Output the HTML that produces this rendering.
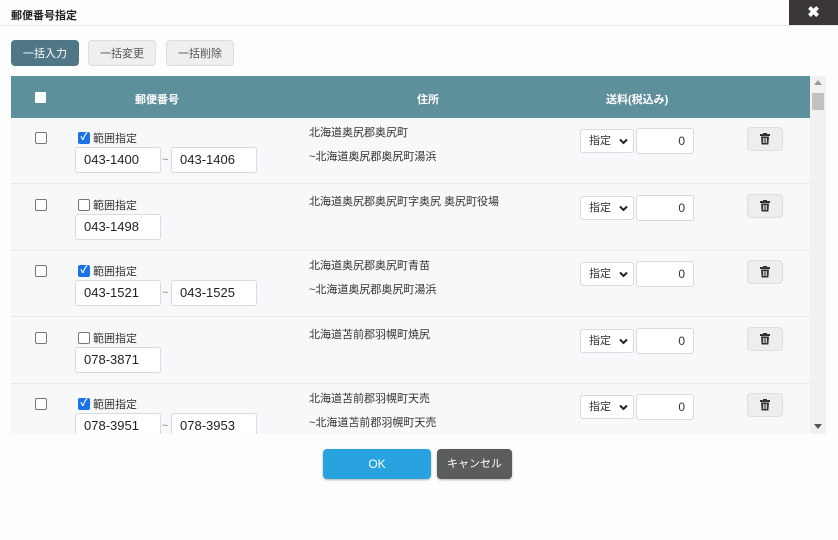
<!DOCTYPE html><html><head><meta charset="utf-8"><style>
*{box-sizing:border-box;margin:0;padding:0}
body{width:838px;height:540px;background:#fdfdfd;font-family:"Liberation Sans","Noto Sans CJK JP",sans-serif;position:relative;overflow:hidden;color:#333}
.a{position:absolute}
.title{left:11px;top:7px;font-size:11px;font-weight:bold;color:#222}
.close{left:789px;top:0;width:49px;height:25px;background:#3a3538;color:#fff;font-size:15px;font-weight:bold;text-align:center;line-height:25px}
.btn{top:40px;height:26px;border-radius:4px;font-size:11px;text-align:center;line-height:26px;background:#efefef;border:1px solid #ddd;color:#555}
.hdr{left:11px;top:76px;width:799px;height:42px;background:#5e909c;color:#fff;font-size:11px;font-weight:bold}
.hdr span{position:absolute;top:15px}
.sb{left:810px;top:76px;width:16px;height:358px;background:#f1f1f1}
.row{left:0;width:799px;height:66px;background:#f7f8fa;border-bottom:1px solid #e6e8eb}
.cb{width:12px;height:12px;border:1px solid #777;border-radius:2px;background:#fff}
.ck{width:12px;height:12px;border-radius:2px;background:#1a73e8;color:#fff;font-size:10px;line-height:12px;text-align:center;font-weight:bold}
.inp{height:26px;border:1px solid #d8dbe0;border-radius:3px;background:#fff;font-size:13px;padding-left:8px;line-height:24px;color:#222}
.lbl{font-size:11px;color:#333}
.addr{font-size:11px;line-height:24px;color:#333}
.sel{width:54px;height:24px;border:1px solid #d8dbe0;border-radius:3px;background:#fff;font-size:11px;line-height:22px;padding-left:8px}
.sel svg{position:absolute;left:38px;top:8px}
.num{width:58px;height:26px;border:1px solid #d8dbe0;border-radius:3px;background:#fff;font-size:12px;text-align:right;padding-right:8px;line-height:24px}
.tr{width:36px;height:24px;border:1px solid #ddd;border-radius:4px;background:#eee;text-align:center}
</style></head><body>
<div class="a title">郵便番号指定</div>
<div class="a" style="left:0;top:25px;width:838px;height:1px;background:#e8e8e8"></div>
<div class="a close">✖</div>
<div class="a btn" style="left:11px;width:68px;background:#4f7786;color:#fff;border-color:#4f7786">一括入力</div>
<div class="a btn" style="left:88px;width:68px">一括変更</div>
<div class="a btn" style="left:166px;width:68px">一括削除</div>
<div class="a hdr"><div class="a" style="left:24px;top:16px;width:11px;height:11px;background:#fff;border-radius:1px"></div><span style="left:124px">郵便番号</span><span style="left:406px">住所</span><span style="left:595px">送料(税込み)</span></div>
<div class="a sb"><div class="a" style="left:4px;top:4px;border:4px solid transparent;border-bottom:5px solid #999;border-top:0"></div><div class="a" style="left:2px;top:17px;width:12px;height:17px;background:#c1c1c1"></div><div class="a" style="left:4px;top:348px;border:4px solid transparent;border-top:5px solid #555;border-bottom:0"></div></div>
<div class="a" style="left:11px;top:118px;width:799px;height:316px;overflow:hidden">
<div class="a row" style="top:0"><div class="a cb" style="left:24px;top:14px"></div><div class="a ck" style="left:67px;top:14px">✓</div><div class="a lbl" style="left:82px;top:12px">範囲指定</div><div class="a inp" style="left:64px;top:29px;width:86px">043-1400</div><div class="a lbl" style="left:151px;top:36px;color:#888">~</div><div class="a inp" style="left:160px;top:29px;width:86px">043-1406</div><div class="a addr" style="left:298px;top:3px">北海道奥尻郡奥尻町<br>~北海道奥尻郡奥尻町湯浜</div><div class="a sel" style="left:569px;top:11px">指定<svg width="9" height="7" viewBox="0 0 9 7"><path d="M1 1.5l3.5 3.5 3.5-3.5" stroke="#222" stroke-width="2" fill="none"/></svg></div><div class="a num" style="left:625px;top:10px">0</div><div class="a tr" style="left:736px;top:9px"><svg width="10" height="12" viewBox="0 0 10 12" style="margin-top:5px"><rect x="0" y="1" width="10" height="2" fill="#333"/><rect x="3" y="0" width="4" height="2" fill="#333"/><path d="M1 3.5h8l-.6 8H1.6z" fill="#333"/><path d="M3.5 5v5M5 5v5M6.5 5v5" stroke="#eee" stroke-width=".8"/></svg></div></div>
<div class="a row" style="top:66px;height:67px"><div class="a cb" style="left:24px;top:15px"></div><div class="a cb" style="left:67px;top:15px"></div><div class="a lbl" style="left:82px;top:13px">範囲指定</div><div class="a inp" style="left:64px;top:30px;width:86px">043-1498</div><div class="a addr" style="left:298px;top:6px">北海道奥尻郡奥尻町字奥尻 奥尻町役場</div><div class="a sel" style="left:569px;top:12px">指定<svg width="9" height="7" viewBox="0 0 9 7"><path d="M1 1.5l3.5 3.5 3.5-3.5" stroke="#222" stroke-width="2" fill="none"/></svg></div><div class="a num" style="left:625px;top:11px">0</div><div class="a tr" style="left:736px;top:10px"><svg width="10" height="12" viewBox="0 0 10 12" style="margin-top:5px"><rect x="0" y="1" width="10" height="2" fill="#333"/><rect x="3" y="0" width="4" height="2" fill="#333"/><path d="M1 3.5h8l-.6 8H1.6z" fill="#333"/><path d="M3.5 5v5M5 5v5M6.5 5v5" stroke="#eee" stroke-width=".8"/></svg></div></div>
<div class="a row" style="top:133px"><div class="a cb" style="left:24px;top:14px"></div><div class="a ck" style="left:67px;top:14px">✓</div><div class="a lbl" style="left:82px;top:12px">範囲指定</div><div class="a inp" style="left:64px;top:29px;width:86px">043-1521</div><div class="a lbl" style="left:151px;top:36px;color:#888">~</div><div class="a inp" style="left:160px;top:29px;width:86px">043-1525</div><div class="a addr" style="left:298px;top:3px">北海道奥尻郡奥尻町青苗<br>~北海道奥尻郡奥尻町湯浜</div><div class="a sel" style="left:569px;top:11px">指定<svg width="9" height="7" viewBox="0 0 9 7"><path d="M1 1.5l3.5 3.5 3.5-3.5" stroke="#222" stroke-width="2" fill="none"/></svg></div><div class="a num" style="left:625px;top:10px">0</div><div class="a tr" style="left:736px;top:9px"><svg width="10" height="12" viewBox="0 0 10 12" style="margin-top:5px"><rect x="0" y="1" width="10" height="2" fill="#333"/><rect x="3" y="0" width="4" height="2" fill="#333"/><path d="M1 3.5h8l-.6 8H1.6z" fill="#333"/><path d="M3.5 5v5M5 5v5M6.5 5v5" stroke="#eee" stroke-width=".8"/></svg></div></div>
<div class="a row" style="top:199px;height:67px"><div class="a cb" style="left:24px;top:15px"></div><div class="a cb" style="left:67px;top:15px"></div><div class="a lbl" style="left:82px;top:13px">範囲指定</div><div class="a inp" style="left:64px;top:30px;width:86px">078-3871</div><div class="a addr" style="left:298px;top:6px">北海道苫前郡羽幌町焼尻</div><div class="a sel" style="left:569px;top:12px">指定<svg width="9" height="7" viewBox="0 0 9 7"><path d="M1 1.5l3.5 3.5 3.5-3.5" stroke="#222" stroke-width="2" fill="none"/></svg></div><div class="a num" style="left:625px;top:11px">0</div><div class="a tr" style="left:736px;top:10px"><svg width="10" height="12" viewBox="0 0 10 12" style="margin-top:5px"><rect x="0" y="1" width="10" height="2" fill="#333"/><rect x="3" y="0" width="4" height="2" fill="#333"/><path d="M1 3.5h8l-.6 8H1.6z" fill="#333"/><path d="M3.5 5v5M5 5v5M6.5 5v5" stroke="#eee" stroke-width=".8"/></svg></div></div>
<div class="a row" style="top:266px"><div class="a cb" style="left:24px;top:14px"></div><div class="a ck" style="left:67px;top:14px">✓</div><div class="a lbl" style="left:82px;top:12px">範囲指定</div><div class="a inp" style="left:64px;top:29px;width:86px">078-3951</div><div class="a lbl" style="left:151px;top:36px;color:#888">~</div><div class="a inp" style="left:160px;top:29px;width:86px">078-3953</div><div class="a addr" style="left:298px;top:3px">北海道苫前郡羽幌町天売<br>~北海道苫前郡羽幌町天売</div><div class="a sel" style="left:569px;top:11px">指定<svg width="9" height="7" viewBox="0 0 9 7"><path d="M1 1.5l3.5 3.5 3.5-3.5" stroke="#222" stroke-width="2" fill="none"/></svg></div><div class="a num" style="left:625px;top:10px">0</div><div class="a tr" style="left:736px;top:9px"><svg width="10" height="12" viewBox="0 0 10 12" style="margin-top:5px"><rect x="0" y="1" width="10" height="2" fill="#333"/><rect x="3" y="0" width="4" height="2" fill="#333"/><path d="M1 3.5h8l-.6 8H1.6z" fill="#333"/><path d="M3.5 5v5M5 5v5M6.5 5v5" stroke="#eee" stroke-width=".8"/></svg></div></div>
</div>
<div class="a" style="left:323px;top:449px;width:108px;height:30px;background:#29a3e0;border-radius:4px;color:#fff;font-size:12px;text-align:center;line-height:30px;box-shadow:0 1px 2px rgba(0,0,0,.3)">OK</div>
<div class="a" style="left:437px;top:449px;width:75px;height:30px;background:#5a5c5e;border-radius:4px;color:#fff;font-size:11px;text-align:center;line-height:30px;box-shadow:0 1px 2px rgba(0,0,0,.3)">キャンセル</div>
</body></html>
